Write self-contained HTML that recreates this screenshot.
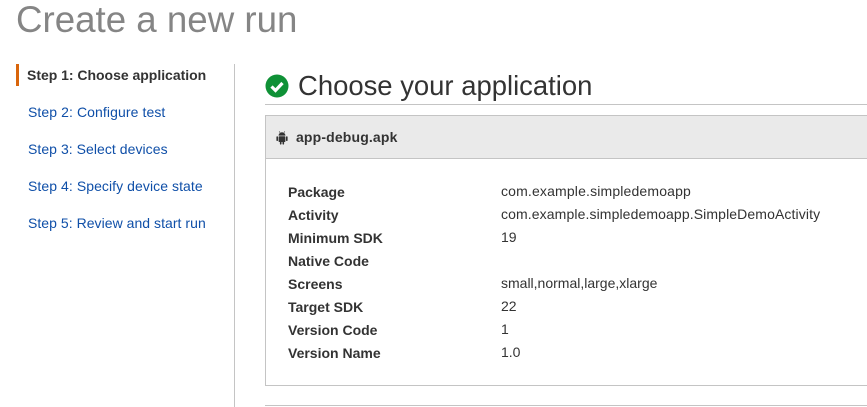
<!DOCTYPE html>
<html><head><meta charset="utf-8"><style>
html,body{margin:0;padding:0;background:#fff;width:867px;height:407px;overflow:hidden}
body{position:relative;font-family:"Liberation Sans",sans-serif;color:#333}
.a{position:absolute;white-space:nowrap}
.s{left:28px;font-size:14px;color:#0f4fa8;line-height:18px}
.k{left:288px;font-size:14px;font-weight:bold;line-height:18px;color:#333}
.v{left:501px;font-size:14px;line-height:18px;color:#333}
</style></head><body>
<div class="a" style="left:16px;top:-3px;font-size:36.7px;line-height:46px;color:#858585">Create a new run</div>
<div class="a" style="left:16px;top:64px;width:3px;height:22px;background:#d9650b"></div>
<div class="a" style="left:27px;top:66px;font-size:14px;font-weight:bold;line-height:18px;color:#333;letter-spacing:-.02px">Step 1: Choose application</div>
<div class="a s" style="top:103px;letter-spacing:.09px">Step 2: Configure test</div>
<div class="a s" style="top:140px;letter-spacing:.05px">Step 3: Select devices</div>
<div class="a s" style="top:177px;letter-spacing:.07px">Step 4: Specify device state</div>
<div class="a s" style="top:214px;letter-spacing:.04px">Step 5: Review and start run</div>
<div class="a" style="left:234px;top:64px;width:1px;height:343px;background:#c4c4c4"></div>
<svg class="a" style="left:265px;top:74px" width="24" height="24" viewBox="0 0 24 24"><circle cx="12" cy="12" r="11.5" fill="#0f9136"/><path d="M6.5 12.5l4 4 7-7.5" fill="none" stroke="#fff" stroke-width="3.2"/></svg>
<div class="a" style="left:298px;top:69px;font-size:27.45px;line-height:34px;color:#333">Choose your application</div>
<div class="a" style="left:265px;top:104px;width:602px;height:1px;background:#c4c4c4"></div>
<div class="a" style="left:265px;top:115px;width:602px;height:269px;border:1px solid #c4c4c4;border-right:0;box-sizing:content-box"></div>
<div class="a" style="left:266px;top:116px;width:601px;height:42px;background:#eaeaea;border-bottom:1px solid #c4c4c4"></div>
<svg class="a" style="left:276px;top:131px" width="12" height="14" viewBox="0 0 12 14"><path d="M2.6 4.6a3.4 3.4 0 0 1 6.8 0z" fill="#333"/><path d="M4 1.6L3.2.4M8 1.6L8.8.4" stroke="#333" stroke-width=".7"/><rect x="2.6" y="5.2" width="6.8" height="5.8" rx=".8" fill="#333"/><rect x=".4" y="5.2" width="1.6" height="4.8" rx=".8" fill="#333"/><rect x="10" y="5.2" width="1.6" height="4.8" rx=".8" fill="#333"/><rect x="3.9" y="10" width="1.6" height="3.6" rx=".8" fill="#333"/><rect x="6.5" y="10" width="1.6" height="3.6" rx=".8" fill="#333"/></svg>
<div class="a" style="left:296px;top:128px;font-size:14px;font-weight:bold;line-height:18px;color:#333;letter-spacing:.15px">app-debug.apk</div>
<div class="a k" style="top:183px">Package</div><div class="a v" style="top:182px;letter-spacing:.16px">com.example.simpledemoapp</div>
<div class="a k" style="top:206px">Activity</div><div class="a v" style="top:205px;letter-spacing:.11px">com.example.simpledemoapp.SimpleDemoActivity</div>
<div class="a k" style="top:229px">Minimum SDK</div><div class="a v" style="top:228px">19</div>
<div class="a k" style="top:252px">Native Code</div>
<div class="a k" style="top:275px">Screens</div><div class="a v" style="top:274px">small,normal,large,xlarge</div>
<div class="a k" style="top:298px">Target SDK</div><div class="a v" style="top:297px">22</div>
<div class="a k" style="top:321px">Version Code</div><div class="a v" style="top:320px">1</div>
<div class="a k" style="top:344px">Version Name</div><div class="a v" style="top:343px">1.0</div>
<div class="a" style="left:265px;top:405px;width:602px;height:1px;background:#c4c4c4"></div>
</body></html>
